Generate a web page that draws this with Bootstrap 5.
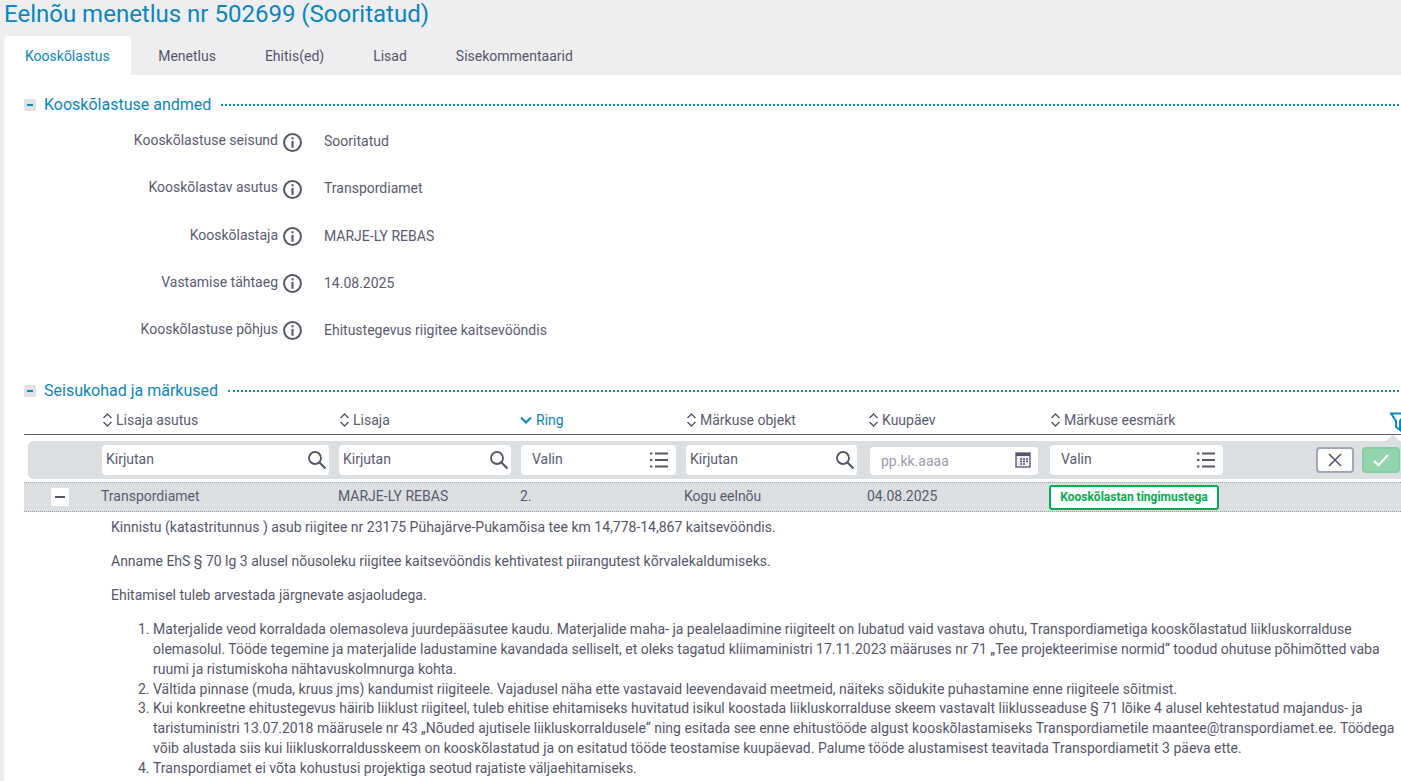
<!DOCTYPE html>
<html lang="et">
<head>
<meta charset="utf-8">
<title>Eelnõu menetlus nr 502699</title>
<link href="https://cdn.jsdelivr.net/npm/bootstrap@5.3.0/dist/css/bootstrap.min.css" rel="stylesheet">
<style>
html,body{height:781px;overflow:hidden}
body{background:#eeeef1;font-family:Roboto,"Liberation Sans",sans-serif;font-size:14px;color:#5a5b70;line-height:1.4}
.page-wrap{width:1415px}
.page-title{font-size:24px;line-height:28px;font-weight:400;color:#0a86c0;margin:0;padding:0 0 0 4px;height:36px}
.tab-bar{border:0;padding-left:4px;height:39px;flex-wrap:nowrap}
.tab-bar .nav-link{border:0;border-radius:4px 4px 0 0;color:#55566a;font-size:14px;line-height:20px;padding:10px 21px 9px;height:39px;margin:0}
.tab-bar .nav-link.active{background:#fff;color:#0a86c0}
.tab-bar .nav-item+.nav-item .nav-link{padding:10px 24.5px 9px}
.tab-bar .nav-item:nth-child(2){margin-left:3px}
.content-pane{background:#fff;margin-left:4px;padding:20px 0 0 20px;height:706px}
.sect-head{height:20px;color:#0a86c0;font-size:16px;line-height:20px}
.sect-toggle{width:12px;height:12px;background:#dde0e4;border-radius:2px;margin-right:8px;flex:none;position:relative}
.sect-toggle::after{content:"";position:absolute;left:3px;top:5px;width:6px;height:2px;background:#0a86c0}
.sect-rule{flex:1;border-top:2px dotted #0a86c0;margin-left:10px}
.field-row{height:47.15px}
.field-label{width:254px;text-align:right;margin-top:-2px}
.info-ico{width:19px;height:19px;margin:0 22px 0 5px;flex:none}
.fields{padding-top:3.5px;margin-bottom:27.25px}
.head-row{display:grid;height:34px;box-sizing:border-box;padding-top:5px;border-bottom:1px solid #5f6072;color:#5a5b70;align-items:center;grid-template-columns:78px 237px 182px 165px 182px 182px 1fr}
.head-cell{display:flex;align-items:center;gap:3px;height:27px}
.head-cell.sorted{color:#0a86c0}
.sort-ico{width:11px;height:16px;flex:none}
.sort-ico.wide{width:12px;margin-left:-1px;margin-right:1px}
.funnel{position:absolute;left:1366px;top:11px;width:16px;height:20px}
.filter-row{display:grid;background:#dcdfe2;margin:6px 0 3px 4px;height:38px;border-radius:5px;padding-top:4px;grid-template-columns:74px 237px 182px 165px 184px 180px 1fr}
.flt-box{position:relative;height:30px;background:#fff;border-radius:4px}
.flt-box .form-control{height:30px;border:0;background:transparent;padding:0 30px 2px 4px;font-size:14px;color:#5a5b70;border-radius:4px}
.flt-box .form-control::placeholder{color:#5a5b70;opacity:1}
.flt-box.pad .form-control{padding-left:11px}
.flt-box.pale .form-control::placeholder{color:#9a9bab}
.flt-box.pale{margin-top:2px;height:28px}
.flt-box.pale .form-control{height:28px;padding-bottom:0}
.flt-box svg{position:absolute;right:2px;top:5px;width:20px;height:20px}
.flt-box.pad svg{right:7px}
.flt-box.pale svg{right:7px;top:4px;width:16px;height:18px}
.w-a{width:227px}.w-b{width:172px}.w-c{width:155px}.w-d{width:171px}.w-e{width:168px}.w-f{width:173px;flex:none}
.flt-actions{display:flex;gap:8px}
.btn-x,.btn-ok{width:38px;height:26px;padding:0;border-radius:4px;display:flex;align-items:center;justify-content:center;margin-top:2px}
.btn-x{background:#fff;border:2px solid #a3a5bb;margin-left:85px}
.btn-x:hover{background:#fff;border-color:#a3a5bb}
.btn-ok{background:#95d5ae;border:2px solid #84cfa2}
.btn-ok:hover{background:#95d5ae;border-color:#84cfa2}
.filter-notch{position:absolute;left:1362px;top:34px;width:0;height:0;border-left:7px solid transparent;border-right:7px solid transparent;border-bottom:6px solid #dcdfe2}
.data-row{display:grid;background:#dcdfe2;height:30px;border-top:1px dotted #9a9ca5;border-bottom:1px dotted #9a9ca5;align-items:center;grid-template-columns:78px 237px 182px 164px 183px 182px 1fr}
.row-toggle{width:18px;height:18px;background:#fff;border-radius:2px;margin-left:27px;position:relative;display:block;border:0;padding:0}
.row-toggle::after{content:"";position:absolute;left:4px;top:8px;width:10px;height:2px;background:#55566a}
.cell-a{margin:-2px 0 0 -1px}
.status-tag{display:inline-block;border:2px solid #00ad50;background:#fff;color:#00ad50;border-radius:3px;font-size:12px;font-weight:700;line-height:21px;height:25px;width:170px;text-align:center;margin-left:-1px}
.note-body{padding:6px 0 0 87px;width:1377px;color:#55566a}
.note-body p{margin:0 0 14.4px;line-height:19.6px}
.note-body ol{margin:0;padding-left:42px;line-height:19.75px;width:1289px}
</style>
</head>
<body>
<svg width="0" height="0" class="d-block position-absolute">
<symbol id="i-info" viewBox="0 0 18 18"><circle cx="9" cy="9" r="8" fill="none" stroke="#55566a" stroke-width="1.900"/><rect x="8" y="7.500" width="2" height="6.500" fill="#55566a"/><rect x="8" y="4" width="2" height="2" fill="#55566a"/></symbol>
<symbol id="i-sort" viewBox="0 0 11 16"><path d="M1.500 6 5.500 2l4 4M1.500 10l4 4 4-4" fill="none" stroke="#55566a" stroke-width="1.400"/></symbol>
<symbol id="i-search" viewBox="0 0 20 20"><circle cx="8" cy="8" r="6" fill="none" stroke="#55566a" stroke-width="1.800"/><path d="m12.500 12.500 6 6" stroke="#55566a" stroke-width="2.200"/></symbol>
<symbol id="i-list" viewBox="0 0 20 20"><path d="M6 3.500h13M6 10h13M6 16.500h13" stroke="#55566a" stroke-width="2"/><path d="M1 3.500h2.400M1 10h2.400M1 16.500h2.400" stroke="#55566a" stroke-width="2"/></symbol>
<symbol id="i-cal" viewBox="0 0 16 18"><rect x="1" y="2" width="14" height="14" fill="#eef0f2" stroke="#55566a" stroke-width="1.300"/><rect x="1" y="2" width="14" height="3" fill="#55566a"/><path d="M5 8h2M8 8h2M11 8h2M5 10.500h2M8 10.500h2M11 10.500h2M5 13h2M8 13h2" stroke="#55566a" stroke-width="1.300"/></symbol>
</svg>
<div class="page-wrap">
<h1 class="page-title">Eelnõu menetlus nr 502699 (Sooritatud)</h1>
<ul class="nav nav-tabs tab-bar">
<li class="nav-item"><a class="nav-link active" href="#">Kooskõlastus</a></li>
<li class="nav-item"><a class="nav-link" href="#">Menetlus</a></li>
<li class="nav-item"><a class="nav-link" href="#">Ehitis(ed)</a></li>
<li class="nav-item"><a class="nav-link" href="#">Lisad</a></li>
<li class="nav-item"><a class="nav-link" href="#">Sisekommentaarid</a></li>
</ul>
<main class="content-pane">
<div class="sect-head d-flex align-items-center"><span class="sect-toggle"></span><span>Kooskõlastuse andmed</span><span class="sect-rule"></span></div>
<div class="fields">
<div class="field-row d-flex align-items-center"><span class="field-label">Kooskõlastuse seisund</span><svg class="info-ico"><use href="#i-info"/></svg><span>Sooritatud</span></div>
<div class="field-row d-flex align-items-center"><span class="field-label">Kooskõlastav asutus</span><svg class="info-ico"><use href="#i-info"/></svg><span>Transpordiamet</span></div>
<div class="field-row d-flex align-items-center"><span class="field-label">Kooskõlastaja</span><svg class="info-ico"><use href="#i-info"/></svg><span>MARJE-LY REBAS</span></div>
<div class="field-row d-flex align-items-center"><span class="field-label">Vastamise tähtaeg</span><svg class="info-ico"><use href="#i-info"/></svg><span>14.08.2025</span></div>
<div class="field-row d-flex align-items-center"><span class="field-label">Kooskõlastuse põhjus</span><svg class="info-ico"><use href="#i-info"/></svg><span>Ehitustegevus riigitee kaitsevööndis</span></div>
</div>
<div class="sect-head d-flex align-items-center"><span class="sect-toggle"></span><span>Seisukohad ja märkused</span><span class="sect-rule"></span></div>
<div class="position-relative">
<div class="head-row">
<span></span>
<div class="head-cell"><svg class="sort-ico"><use href="#i-sort"/></svg>Lisaja asutus</div>
<div class="head-cell"><svg class="sort-ico"><use href="#i-sort"/></svg>Lisaja</div>
<div class="head-cell sorted"><svg class="sort-ico wide" viewBox="0 0 12 16"><path d="M1 5.500 6 10.500 11 5.500" fill="none" stroke="#0a86c0" stroke-width="2"/></svg>Ring</div>
<div class="head-cell"><svg class="sort-ico"><use href="#i-sort"/></svg>Märkuse objekt</div>
<div class="head-cell"><svg class="sort-ico"><use href="#i-sort"/></svg>Kuupäev</div>
<div class="head-cell"><svg class="sort-ico"><use href="#i-sort"/></svg>Märkuse eesmärk</div>
</div>
<svg class="funnel" viewBox="0 0 16 20"><path d="M1 1.500h14L10 9v9l-4-3V9z" fill="none" stroke="#0a86c0" stroke-width="2"/></svg>
<div class="filter-notch"></div>
<div class="filter-row">
<span></span>
<div class="flt-box w-a"><input class="form-control" placeholder="Kirjutan"><svg><use href="#i-search"/></svg></div>
<div class="flt-box w-b"><input class="form-control" placeholder="Kirjutan"><svg><use href="#i-search"/></svg></div>
<div class="flt-box pad w-c"><input class="form-control" placeholder="Valin"><svg><use href="#i-list"/></svg></div>
<div class="flt-box w-d"><input class="form-control" placeholder="Kirjutan"><svg><use href="#i-search"/></svg></div>
<div class="flt-box pad pale w-e"><input class="form-control" placeholder="pp.kk.aaaa"><svg><use href="#i-cal"/></svg></div>
<div class="flt-actions">
<div class="flt-box pad w-f"><input class="form-control" placeholder="Valin"><svg><use href="#i-list"/></svg></div>
<button class="btn btn-x" type="button" aria-label="Tühista"><svg width="14" height="14" viewBox="0 0 14 14"><path d="m1 1 12 12M13 1 1 13" stroke="#55566a" stroke-width="1.600"/></svg></button>
<button class="btn btn-ok" type="button" aria-label="Kinnita"><svg width="18" height="14" viewBox="0 0 18 14"><path d="m2 8 4.500 4L16 2" fill="none" stroke="#fff" stroke-width="2"/></svg></button>
</div>
</div>
<div class="data-row">
<span><button class="row-toggle" type="button" aria-label="Sulge"></button></span>
<span class="cell-a">Transpordiamet</span>
<span class="cell-a">MARJE-LY REBAS</span>
<span class="cell-a">2.</span>
<span class="cell-a">Kogu eelnõu</span>
<span class="cell-a">04.08.2025</span>
<span><span class="status-tag">Kooskõlastan tingimustega</span></span>
</div>
<div class="note-body">
<p>Kinnistu (katastritunnus ) asub riigitee nr 23175 Pühajärve-Pukamõisa tee km 14,778-14,867 kaitsevööndis.</p>
<p>Anname EhS § 70 lg 3 alusel nõusoleku riigitee kaitsevööndis kehtivatest piirangutest kõrvalekaldumiseks.</p>
<p>Ehitamisel tuleb arvestada järgnevate asjaoludega.</p>
<ol>
<li>Materjalide veod korraldada olemasoleva juurdepääsutee kaudu. Materjalide maha- ja pealelaadimine riigiteelt on lubatud vaid vastava ohutu, Transpordiametiga kooskõlastatud liikluskorralduse olemasolul. Tööde tegemine ja materjalide ladustamine kavandada selliselt, et oleks tagatud kliimaministri 17.11.2023 määruses nr 71 „Tee projekteerimise normid“ toodud ohutuse põhimõtted vaba ruumi ja ristumiskoha nähtavuskolmnurga kohta.</li>
<li>Vältida pinnase (muda, kruus jms) kandumist riigiteele. Vajadusel näha ette vastavaid leevendavaid meetmeid, näiteks sõidukite puhastamine enne riigiteele sõitmist.</li>
<li>Kui konkreetne ehitustegevus häirib liiklust riigiteel, tuleb ehitise ehitamiseks huvitatud isikul koostada liikluskorralduse skeem vastavalt liiklusseaduse § 71 lõike 4 alusel kehtestatud majandus- ja taristuministri 13.07.2018 määrusele nr 43 „Nõuded ajutisele liikluskorraldusele“ ning esitada see enne ehitustööde algust kooskõlastamiseks Transpordiametile maantee@transpordiamet.ee. Töödega võib alustada siis kui liikluskorraldusskeem on kooskõlastatud ja on esitatud tööde teostamise kuupäevad. Palume tööde alustamisest teavitada Transpordiametit 3 päeva ette.</li>
<li>Transpordiamet ei võta kohustusi projektiga seotud rajatiste väljaehitamiseks.</li>
</ol>
</div>
</div>
</main>
</div>
</body>
</html>
